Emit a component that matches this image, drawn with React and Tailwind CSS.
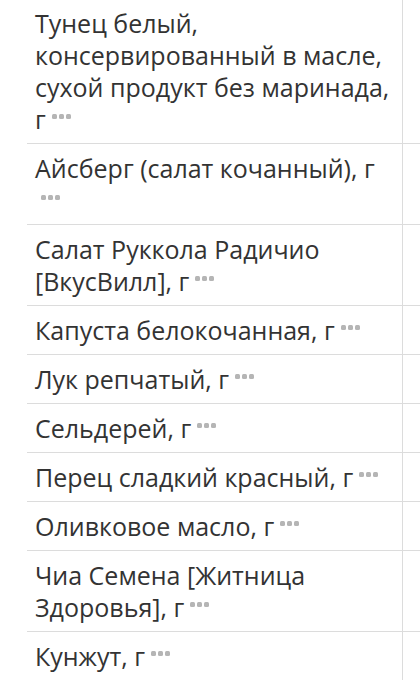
import React from "react";

const rows = [
  "Тунец белый, консервированный в масле, сухой продукт без маринада, г",
  "Айсберг (салат кочанный), г",
  "Салат Руккола Радичио [ВкусВилл], г",
  "Капуста белокочанная, г",
  "Лук репчатый, г",
  "Сельдерей, г",
  "Перец сладкий красный, г",
  "Оливковое масло, г",
  "Чиа Семена [Житница Здоровья], г",
  "Кунжут, г",
];

function Dots() {
  return (
    <svg width="19" height="5" viewBox="0 0 19 5" className="inline-block align-[0.4em] ml-[6px]">
      <rect x="0" y="0" width="5" height="5" rx="1.5" fill="#b5b5b5" />
      <rect x="7" y="0" width="5" height="5" rx="1.5" fill="#b5b5b5" />
      <rect x="14" y="0" width="5" height="5" rx="1.5" fill="#b5b5b5" />
    </svg>
  );
}

export default function App() {
  return (
    <div className="w-[420px] h-[680px] overflow-hidden bg-white" style={{ fontFamily: '"Open Sans", sans-serif' }}>
      <div className="ml-[27px] -mt-px">
        {rows.map((t, i) => (
          <div key={i} className="flex border-b border-[#dcdcdc]">
            <div className="w-[376px] shrink-0 border-r border-[#dcdcdc] pl-2 pr-1 py-2 text-[25px] leading-[32px] text-[#333333]">
              {t}
              <Dots />
            </div>
            <div className="flex-1" />
          </div>
        ))}
      </div>
    </div>
  );
}
